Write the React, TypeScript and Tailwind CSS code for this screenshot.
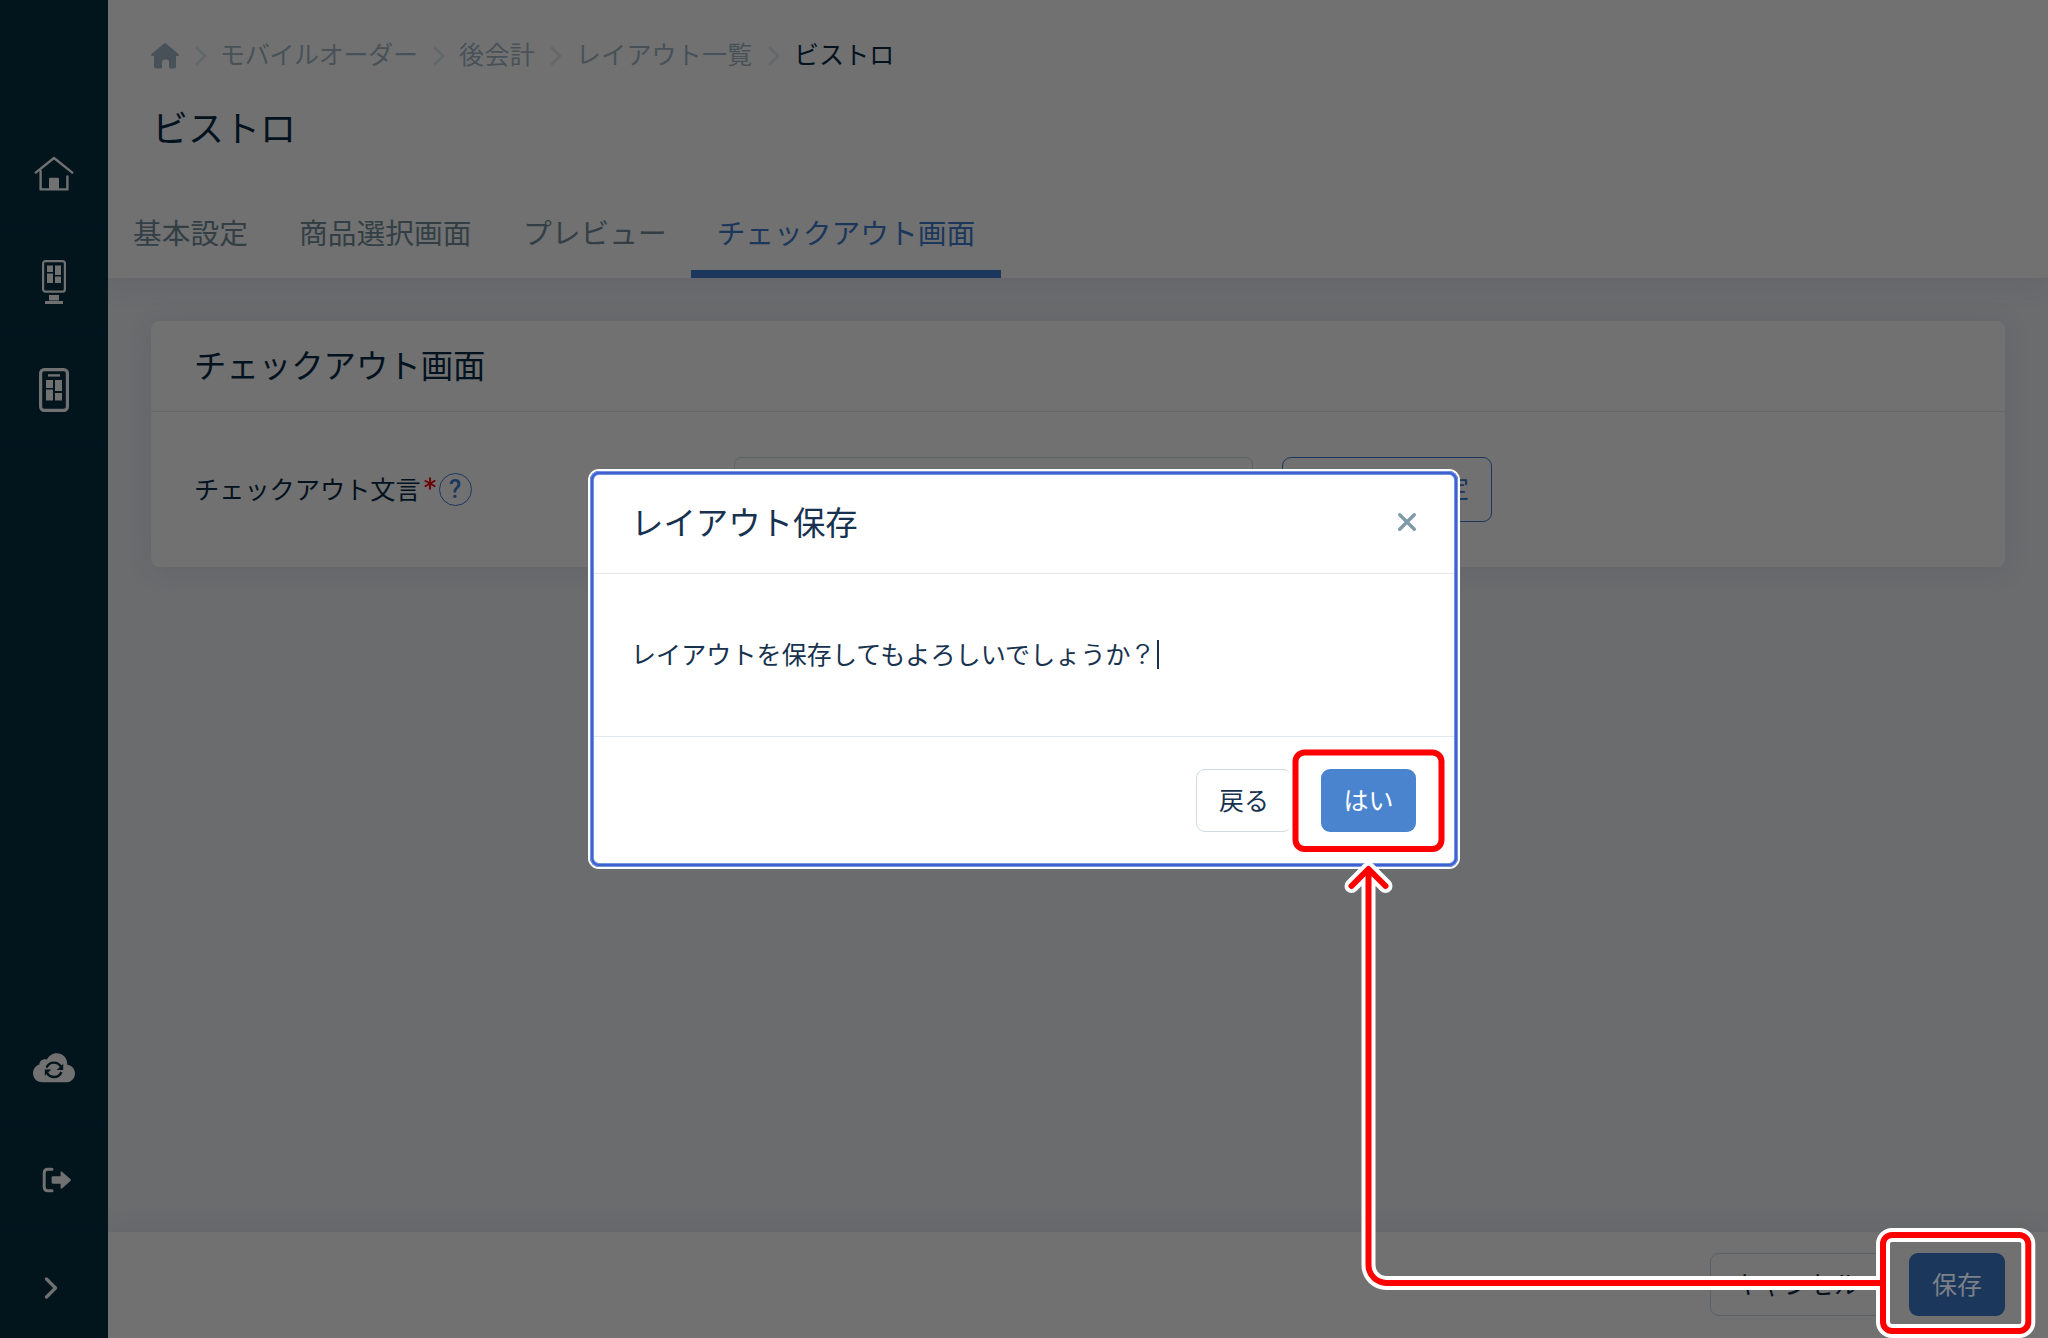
import React from "react";

const jp = "font-['Noto_Sans_CJK_JP',sans-serif]";

function HouseIcon() {
  return (
    <svg width="40" height="36" viewBox="0 0 40 36" fill="none" stroke="#717171" strokeWidth="2.4" strokeLinecap="round" strokeLinejoin="round">
      <path d="M1.7 16.6 L20 2 L38.3 16.6" />
      <path d="M6.6 15 V33.4 H33.4 V20.5" />
      <path d="M15 34 V23 Q15 21.8 16.2 21.8 H23.8 Q25 21.8 25 23 V34 Z" fill="#717171" stroke="none" />
    </svg>
  );
}

function KioskIcon() {
  return (
    <svg width="24" height="44" viewBox="0 0 24 44" fill="#717171">
      <rect x="1.1" y="1.1" width="21.8" height="30.6" rx="2.4" fill="none" stroke="#717171" strokeWidth="2.2" />
      <path d="M5 5.5h6v6.5h-6z M13 5.5h6v9.5h-6z M5 13.5h6v9.5h-6z M13 16.5h6v6.5h-6z" />
      <path d="M7 35h10v5.5h-10z M3 41h18v3h-18z" />
    </svg>
  );
}

function PhoneIcon() {
  return (
    <svg width="30" height="44" viewBox="0 0 30 44" fill="#717171">
      <rect x="1.6" y="1.6" width="26.8" height="40.8" rx="3.6" fill="none" stroke="#717171" strokeWidth="3.2" />
      <path d="M9 6.2h12v2.4h-12z" />
      <path d="M7 12h7v8h-7z M16 12h7v11h-7z M7 21.5h7v11h-7z M16 25h7v7.5h-7z" />
    </svg>
  );
}

function CloudSyncIcon() {
  return (
    <svg width="42" height="30" viewBox="0 0 42 30">
      <path d="M9 29.3 C4 29.3 0 25.3 0 20.3 C0 16.2 2.6 12.7 6.3 11.5 C6.5 8.6 8.6 6.2 11.8 6.2 C12.6 6.2 13.2 6.3 13.9 6.6 C15.8 2.8 19.4 0.3 23.6 0.3 C29.6 0.3 34.2 4.8 34.2 10.7 V11.8 C38.6 12.4 42 15.8 42 20.4 C42 25.3 38 29.3 33.2 29.3 Z" fill="#717171" />
      <g fill="none" stroke="#03151c" strokeWidth="2.4">
        <path d="M13.6 14.6 C14.8 11.6 17.6 9.6 20.9 9.6 C24 9.6 26.6 11.3 28 13.8" />
        <path d="M28.4 19 C27.2 22 24.4 24 21.1 24 C18 24 15.4 22.3 14 19.8" />
      </g>
      <path d="M30.2 10.8 V17 H23.6 L26.4 14.6 Z M11.8 22.8 V16.6 H18.4 L15.6 19 Z" fill="#03151c" />
    </svg>
  );
}

function LogoutIcon() {
  return (
    <svg width="30" height="26" viewBox="0 0 30 26">
      <path d="M10 2.2 H6 Q2.2 2.2 2.2 6 V20 Q2.2 23.8 6 23.8 H10" fill="none" stroke="#717171" strokeWidth="3" strokeLinecap="round" />
      <path d="M11 9.3 H18.6 V5.4 Q18.6 3.6 20 4.8 L28.4 12 Q29.6 13 28.4 14 L20 21.4 Q18.6 22.4 18.6 20.6 V16.7 H11 Q9.6 16.7 9.6 15.3 V10.7 Q9.6 9.3 11 9.3 Z" fill="#717171" />
    </svg>
  );
}

function Crumb({ className, children }: { className: string; children: React.ReactNode }) {
  return <span className={"shrink-0 pb-[5px] whitespace-nowrap " + className}>{children}</span>;
}

function CrumbArrow() {
  return (
    <svg className="shrink-0" width="12" height="20" viewBox="0 0 12 20" fill="none" stroke="#65686a" strokeWidth="2.6" strokeLinecap="round" strokeLinejoin="round">
      <path d="M2 2 L10 10 L2 18" />
    </svg>
  );
}

function SideCell({ className = "", children }: { className?: string; children: React.ReactNode }) {
  return <div className={"flex h-[108px] shrink-0 items-center justify-center border-[#03121c] " + className}>{children}</div>;
}

function Sidebar() {
  return (
    <nav className="z-20 flex w-[108px] shrink-0 flex-col bg-[#03151c] pt-[120px]">
      <SideCell className="border-b"><HouseIcon /></SideCell>
      <SideCell className="border-b"><KioskIcon /></SideCell>
      <SideCell className="border-b"><PhoneIcon /></SideCell>
      <div className="grow" />
      <SideCell className="border-b pt-[1px]"><CloudSyncIcon /></SideCell>
      <SideCell className="border-b pt-[9px] pl-[6px]"><LogoutIcon /></SideCell>
      <SideCell className="pt-[7px] pr-[6px]">
        <svg width="14" height="22" viewBox="0 0 14 22" fill="none" stroke="#717171" strokeWidth="3.2" strokeLinecap="round" strokeLinejoin="round">
          <path d="M2.5 2 L11.5 11 L2.5 20" />
        </svg>
      </SideCell>
    </nav>
  );
}

function Header() {
  return (
    <header className="z-10 flex h-[278px] shrink-0 flex-col bg-[#717171] shadow-[0_6px_24px_rgba(50,60,68,0.12)]">
      <div className="flex h-[112px] items-center pl-[43px] text-[25px] leading-none text-[#485158]">
        <svg className="shrink-0" width="28" height="26" viewBox="0 0 28 26" fill="#485158">
          <path d="M13 .6 Q14 -.2 15 .6 L27.4 11 Q28.6 12.6 27 13 H25 V23.5 Q25 25.5 23 25.5 H19.5 Q18 25.5 18 24 V19 Q18 16.5 15.5 16.5 H13.5 Q11 16.5 11 19 V24 Q11 25.5 9.500 25.5 H5.500 Q3 25.5 3 23.5 V13 H1 Q-.6 12.6 .6 11 Z" />
        </svg>
        <span className="w-[16px]" /><CrumbArrow />
        <Crumb className="ml-[13px] w-[213px] tracking-[-0.3px]">モバイルオーダー</Crumb><CrumbArrow />
        <Crumb className="ml-[14px] w-[91px] tracking-[0.4px]">後会計</Crumb><CrumbArrow />
        <Crumb className="ml-[14px] w-[192px] tracking-[0.2px]">レイアウト一覧</Crumb><CrumbArrow />
        <Crumb className="ml-[14px] tracking-[0.1px] text-[#03121f]">ビストロ</Crumb>
      </div>
      <h1 className="h-[82px] pl-[44px] text-[36px] leading-[28px] text-[#03121f]">ビストロ</h1>
      <div className="flex grow text-[28.75px] leading-none whitespace-nowrap text-[#333f45]">
        <div className="flex w-[166px] items-center pb-[8px] pl-[25px]">基本設定</div>
        <div className="flex w-[224px] items-center pb-[8px] pl-[25px]">商品選択画面</div>
        <div className="flex w-[193px] items-center pb-[8px] pl-[25px]">プレビュー</div>
        <div className="flex w-[310px] items-center justify-center border-b-8 border-[#1b375c] text-[#1b375c]">チェックアウト画面</div>
      </div>
    </header>
  );
}

function SettingsCard() {
  return (
    <section className="mx-[43px] mt-[43px] flex h-[246px] flex-col rounded-[8px] bg-[#717171] text-[#03121f] shadow-[0_3px_26px_rgba(50,60,66,0.14)]">
      <div className="flex h-[91px] shrink-0 items-center border-b border-[#656768] pb-[4px] pl-[43px] text-[32.4px] leading-none">チェックアウト画面</div>
      <div className="flex pt-[45px]">
        <div className="flex h-[65px] w-[583px] items-center pl-[43px] text-[25.2px] leading-none">
          <span className="pb-[2px]">チェックアウト文言</span>
          <svg className="mb-[12px] ml-[3px] shrink-0" width="12" height="13" viewBox="0 0 12 13" fill="none" stroke="#6a0508" strokeWidth="2">
            <path d="M6 .5 V12.5 M.7 3.5 L11.300 9.500 M11.300 3.500 L.7 9.500" />
          </svg>
          <span className="mb-[1px] ml-[3px] flex size-[33px] items-center justify-center rounded-full border border-[#1b375c] font-['Roboto'] text-[25px] leading-none font-medium text-[#1b375c]">?</span>
        </div>
        <div className="h-[65px] w-[519px] rounded-[7px] border border-[#5d6264]" />
        <div className="ml-[29px] flex h-[65px] w-[210px] items-center justify-end rounded-[9px] border border-[#1b375c] pr-[22px] pb-[4px] text-[25px] leading-none text-[#1b375c]">文言設定</div>
      </div>
    </section>
  );
}

function SaveDialog() {
  return (
    <div className="absolute left-[590px] top-[471px] flex h-[396px] w-[868px] flex-col rounded-[9px] bg-white px-[4px] pt-[4px] pb-[4px] text-[#16324f] shadow-[inset_0_0_0_1px_#7396de,inset_0_0_0_3px_#3f60d0,inset_0_0_0_4px_#7396de,0_0_0_2px_#ffffff]">
      <div className="flex h-[99px] shrink-0 items-center justify-between border-b border-[#e5e8ea] pb-[4px] pl-[37px] pr-[37px] text-[32.4px] leading-none">
        <span className="pb-[2px]">レイアウト保存</span>
        <svg width="20" height="20" viewBox="0 0 20 20" fill="none" stroke="#7f9aaa" strokeWidth="3.4" strokeLinecap="round">
          <path d="M2.700 2.700 L17.300 17.300 M17.300 2.700 L2.700 17.300" />
        </svg>
      </div>
      <div className="flex grow items-center border-b border-[#e1e9ef] pb-[1px] pl-[37px] text-[25px] leading-none">
        <span className="pb-[3px] tracking-[0.12px]">レイアウトを保存してもよろしいでしょうか</span>
        <span className="w-[25px] origin-center scale-x-115 pl-[5px] font-['Inter'] text-[27px] font-light">?</span>
        <span className="ml-[1px] h-[29px] w-[2px] bg-[#16324f]" />
      </div>
      <div className="flex h-[126px] shrink-0 items-center justify-end gap-[29px] pr-[38px] text-[25px] leading-none">
        <div className="flex h-[63px] w-[96px] items-center justify-center rounded-[9px] border border-[#cfd9e0] pb-[2px]">戻る</div>
        <div className="flex h-[63px] w-[95px] items-center justify-center rounded-[9px] bg-[#4a84cf] pb-[2px] text-white">はい</div>
      </div>
    </div>
  );
}

function Annotations() {
  const arrow = "M1883 1283 H1386.500 A18 18 0 0 1 1368.500 1265 V870 M1351.500 886 L1368.500 869 L1385.500 886";
  return (
    <svg className="pointer-events-none absolute inset-0 z-30" width="2048" height="1338" viewBox="0 0 2048 1338" fill="none" strokeLinecap="round" strokeLinejoin="round">
      <g stroke="#ffffff" strokeWidth="14">
        <rect x="1295.500" y="752.500" width="146" height="96.500" rx="9" />
        <rect x="1883" y="1235" width="145.300" height="96" rx="9" />
        <path d={arrow} />
      </g>
      <g stroke="#ff0000" strokeWidth="6">
        <rect x="1295.500" y="752.500" width="146" height="96.500" rx="9" />
        <rect x="1883" y="1235" width="145.300" height="96" rx="9" />
        <path d={arrow} />
      </g>
    </svg>
  );
}

export default function App() {
  return (
    <div className={"relative flex h-[1338px] w-[2048px] overflow-hidden " + jp}>
      <Sidebar />
      <main className="flex grow flex-col bg-[#6b6c6e]">
        <Header />
        <SettingsCard />
        <div className="grow" />
        <footer className="flex h-[106px] shrink-0 items-start justify-end gap-[26px] bg-[#717171] pr-[43px] pt-[21px] text-[25px] leading-none shadow-[0_-4px_22px_rgba(50,60,68,0.12)]">
          <div className="flex h-[63px] w-[173px] items-center justify-center rounded-[9px] border border-[#5b6165] pb-[2px] text-[#03121f]">キャンセル</div>
          <div className="flex h-[63px] w-[96px] items-center justify-center rounded-[9px] bg-[#1b375c] pb-[3px] text-[#7b8187]">保存</div>
        </footer>
      </main>
      <SaveDialog />
      <Annotations />
    </div>
  );
}
